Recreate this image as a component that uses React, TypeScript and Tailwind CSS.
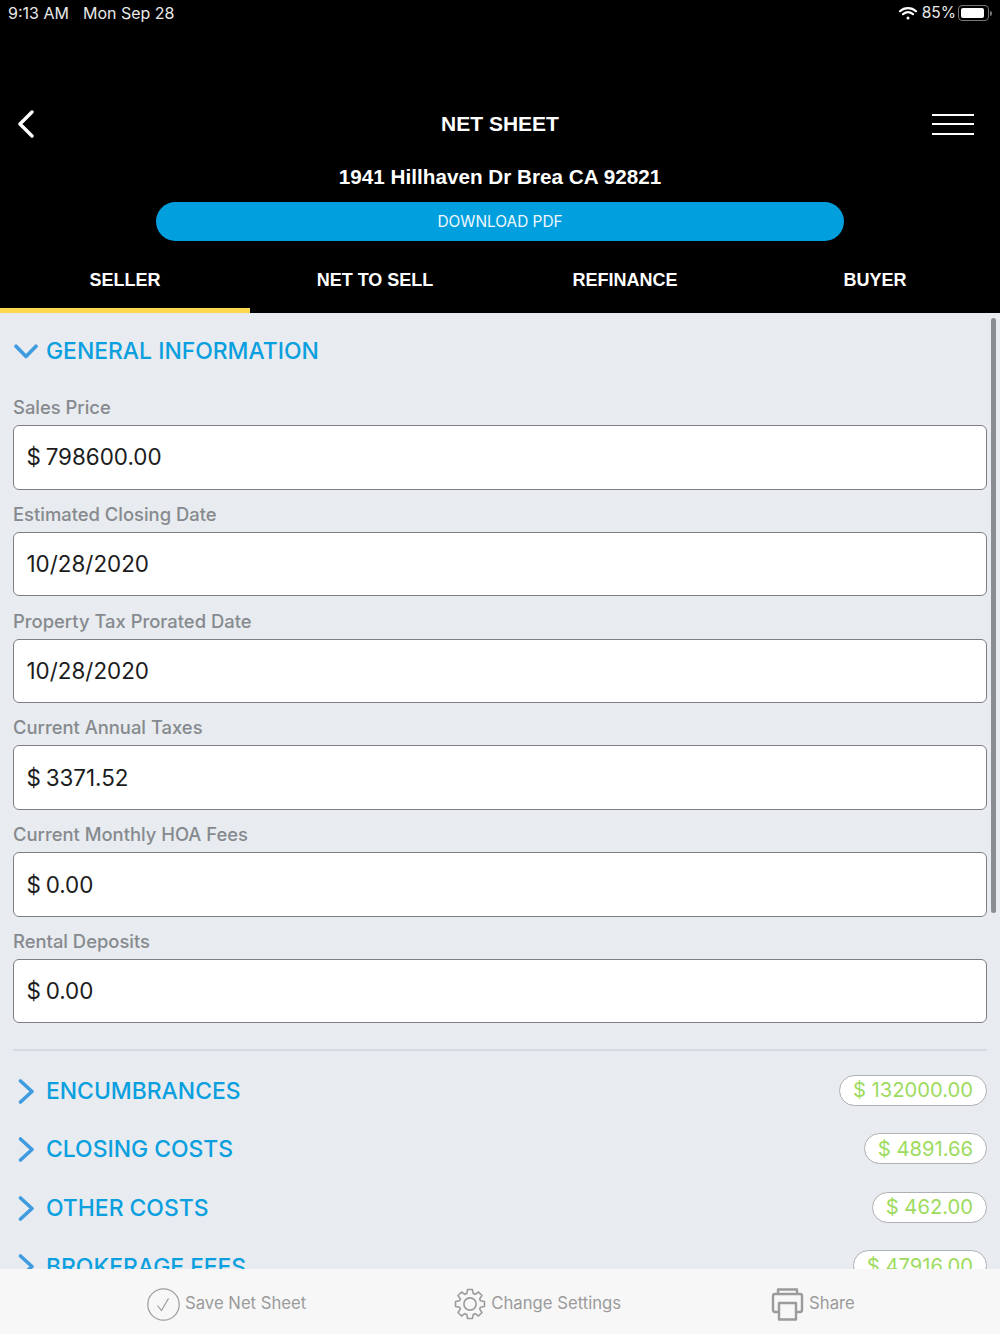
const FIELDS = [
  { label: 'Sales Price', value: '$ 798600.00' },
  { label: 'Estimated Closing Date', value: '10/28/2020' },
  { label: 'Property Tax Prorated Date', value: '10/28/2020' },
  { label: 'Current Annual Taxes', value: '$ 3371.52' },
  { label: 'Current Monthly HOA Fees', value: '$ 0.00' },
  { label: 'Rental Deposits', value: '$ 0.00' },
];

const SECTIONS = [
  { title: 'ENCUMBRANCES', amount: '$ 132000.00' },
  { title: 'CLOSING COSTS', amount: '$ 4891.66' },
  { title: 'OTHER COSTS', amount: '$ 462.00' },
  { title: 'BROKERAGE FEES', amount: '$ 47916.00' },
];

const TABS = ['SELLER', 'NET TO SELL', 'REFINANCE', 'BUYER'];

// eight toothed outline, one closed path round the centre of a 34 box
function gearPath() {
  const pts: string[] = [];
  for (let i = 0; i < 8; i++) {
    const a = (i * Math.PI) / 4;
    const offsets: [number, number][] = [
      [-0.3, 11.6],
      [-0.17, 15.6],
      [0.17, 15.6],
      [0.3, 11.6],
    ];
    for (const [da, r] of offsets) {
      pts.push(`${(17 + r * Math.sin(a + da)).toFixed(2)} ${(17 - r * Math.cos(a + da)).toFixed(2)}`);
    }
  }
  return `M${pts.join(' L')} Z`;
}

function GearIcon() {
  return (
    <svg width="32" height="32" viewBox="0 0 34 34" fill="none" stroke="#9b9b9b" strokeWidth="1.7" strokeLinejoin="round">
      <circle cx="17" cy="17" r="6.5" />
      <path d={gearPath()} />
    </svg>
  );
}

export default function App() {
  return (
    <div className="relative h-[1334px] w-[1000px] overflow-hidden flex flex-col bg-[#e8ebef] font-['Inter',sans-serif]">
      {/* Header */}
      <header className="bg-black text-white shrink-0 h-[313px] flex flex-col">
        <div className="h-[26px] px-[8px] flex items-center justify-between text-[16px] text-[#e8e8e8]">
          <div className="flex gap-[14px]">
            <span>9:13 AM</span>
            <span>Mon Sep 28</span>
          </div>
          <div className="flex items-center">
            <svg width="20" height="16" viewBox="0 0 20 16" fill="none" stroke="white" strokeWidth="2.2" strokeLinecap="round">
              <path d="M2 6.2 C6.5 2 13.5 2 18 6.2" />
              <path d="M5 9.2 C8 6.8 12 6.8 15 9.2" />
              <circle cx="10" cy="13" r="1.5" fill="white" stroke="none" />
            </svg>
            <span className="ml-[4px] text-[15.5px]">85%</span>
            <div className="ml-[2px] flex items-center gap-[1px]">
              <div className="w-[31px] h-[16px] rounded-[4px] border border-[#777] p-[2px]">
                <div className="h-full w-[23px] rounded-[2px] bg-white" />
              </div>
              <div className="w-[2px] h-[5px] rounded-r-sm bg-[#777]" />
            </div>
          </div>
        </div>

        <div className="mt-[74px] h-[48px] px-[26px] grid grid-cols-[1fr_auto_1fr] items-center">
          <svg width="17" height="28" viewBox="0 0 17 28" fill="none" stroke="white" strokeWidth="3.4" strokeLinecap="round" strokeLinejoin="round" className="-ml-[9px]">
            <path d="M15 2 L3 14 L15 26" />
          </svg>
          <h1 className="text-[21px] font-bold font-['Liberation_Sans',sans-serif]">NET SHEET</h1>
          <div className="flex flex-col gap-[7.5px] justify-self-end">
            <div className="w-[42px] h-[2px] bg-white" />
            <div className="w-[42px] h-[2px] bg-white" />
            <div className="w-[42px] h-[2px] bg-white" />
          </div>
        </div>

        <div className="mt-[16px] text-center text-[20.7px] font-bold leading-[26px] font-['Liberation_Sans',sans-serif]">
          1941 Hillhaven Dr Brea CA 92821
        </div>

        <button className="mt-[12px] mx-auto w-[688px] h-[39px] rounded-full bg-[#029fdf] text-[15.4px] text-[#f0f8fc]">
          DOWNLOAD PDF
        </button>

        <nav className="mt-auto grid grid-cols-4 text-[18px] font-bold font-['Liberation_Sans',sans-serif]">
          {TABS.map((tab, i) => (
            <div key={tab} className={`h-[72px] pt-[11px] flex items-center justify-center border-b-[5px] ${i === 0 ? 'border-[#fdd94f]' : 'border-black'}`}>
              {tab}
            </div>
          ))}
        </nav>
      </header>

      {/* Form */}
      <main className="flex-1 min-h-0 overflow-hidden px-[13px]">
        <div className="h-[76px] flex items-center gap-[8px] pl-[1px]">
          <svg width="24" height="15" viewBox="0 0 24 15" fill="none" stroke="#3f9be0" strokeWidth="3.6" strokeLinecap="round" strokeLinejoin="round">
            <path d="M2 2.2 L12 12.5 L22 2.2" />
          </svg>
          <h2 className="text-[22.9px] font-medium text-[#0a9fdf]">GENERAL INFORMATION</h2>
        </div>

        <div className="flex flex-col">
          {FIELDS.map((f) => (
            <div key={f.label} className="h-[106.8px] pt-[6px]">
              <label className="block h-[30px] text-[18.4px] leading-[24px] text-[#868a8e] font-medium">{f.label}</label>
              <div className="h-[64.5px] rounded-[6px] border-[1.5px] border-[#7d7f82] bg-white flex items-center px-[12.5px] text-[22.4px] [word-spacing:-1.5px] text-[#1c1c1c]">
                {f.value}
              </div>
            </div>
          ))}
        </div>

        <div className="mt-[19px] border-t-2 border-[#d3dae2]" />

        <div className="mt-[11px] flex flex-col">
          {SECTIONS.map((s) => (
            <div key={s.title} className="h-[58.6px] shrink-0 flex items-center justify-between">
              <div className="flex items-center gap-[12px] pl-[5px]">
                <svg width="16" height="25" viewBox="0 0 16 25" fill="none" stroke="#3f9be0" strokeWidth="3.6" strokeLinecap="round" strokeLinejoin="round">
                  <path d="M2.5 2 L14 12.5 L2.5 23" />
                </svg>
                <span className="text-[22.9px] font-medium text-[#0a9fdf]">{s.title}</span>
              </div>
              <div className="h-[31px] mb-[2px] px-[13px] rounded-full border border-[#aeb0b3] bg-white flex items-center text-[20.2px] text-[#9ddb5e]">
                {s.amount}
              </div>
            </div>
          ))}
        </div>
      </main>

      {/* Scroll indicator */}
      <div className="absolute left-[991px] top-[318px] w-[5px] h-[595px] rounded-full bg-[#8b8e91]" />

      {/* Bottom toolbar */}
      <footer className="absolute bottom-0 left-0 right-0 h-[65px] bg-[#f7f7f7] text-[16.7px] text-[#9b9b9b]">
        <div className="h-full pt-[5px] pl-[147px] flex items-center">
          <div className="flex items-center gap-[5px]">
            <svg width="33" height="33" viewBox="0 0 33 33" fill="none" stroke="#9b9b9b" strokeWidth="1.2">
              <circle cx="16.5" cy="16.5" r="15.7" />
              <path d="M10.5 17.5 L14.5 22.5 L21.5 10.5" />
            </svg>
            <span className="-mt-[1px]">Save Net Sheet</span>
          </div>
          <div className="ml-[148px] flex items-center gap-[5px]">
            <GearIcon />
            <span className="-mt-[1px]">Change Settings</span>
          </div>
          <div className="ml-[150px] flex items-center gap-[5px]">
            <svg width="33" height="33" viewBox="0 0 33 33" fill="none" stroke="#9b9b9b" strokeWidth="2.4" strokeLinejoin="round">
              <path d="M7 6 V1.5 H26 V6" />
              <path d="M8 24 H4 Q2 24 2 22 V8 Q2 6 4 6 H29 Q31 6 31 8 V22 Q31 24 29 24 H25" />
              <path d="M8 15 H25 V31.5 H8 Z" />
            </svg>
            <span className="-mt-[1px]">Share</span>
          </div>
        </div>
      </footer>
    </div>
  );
}
